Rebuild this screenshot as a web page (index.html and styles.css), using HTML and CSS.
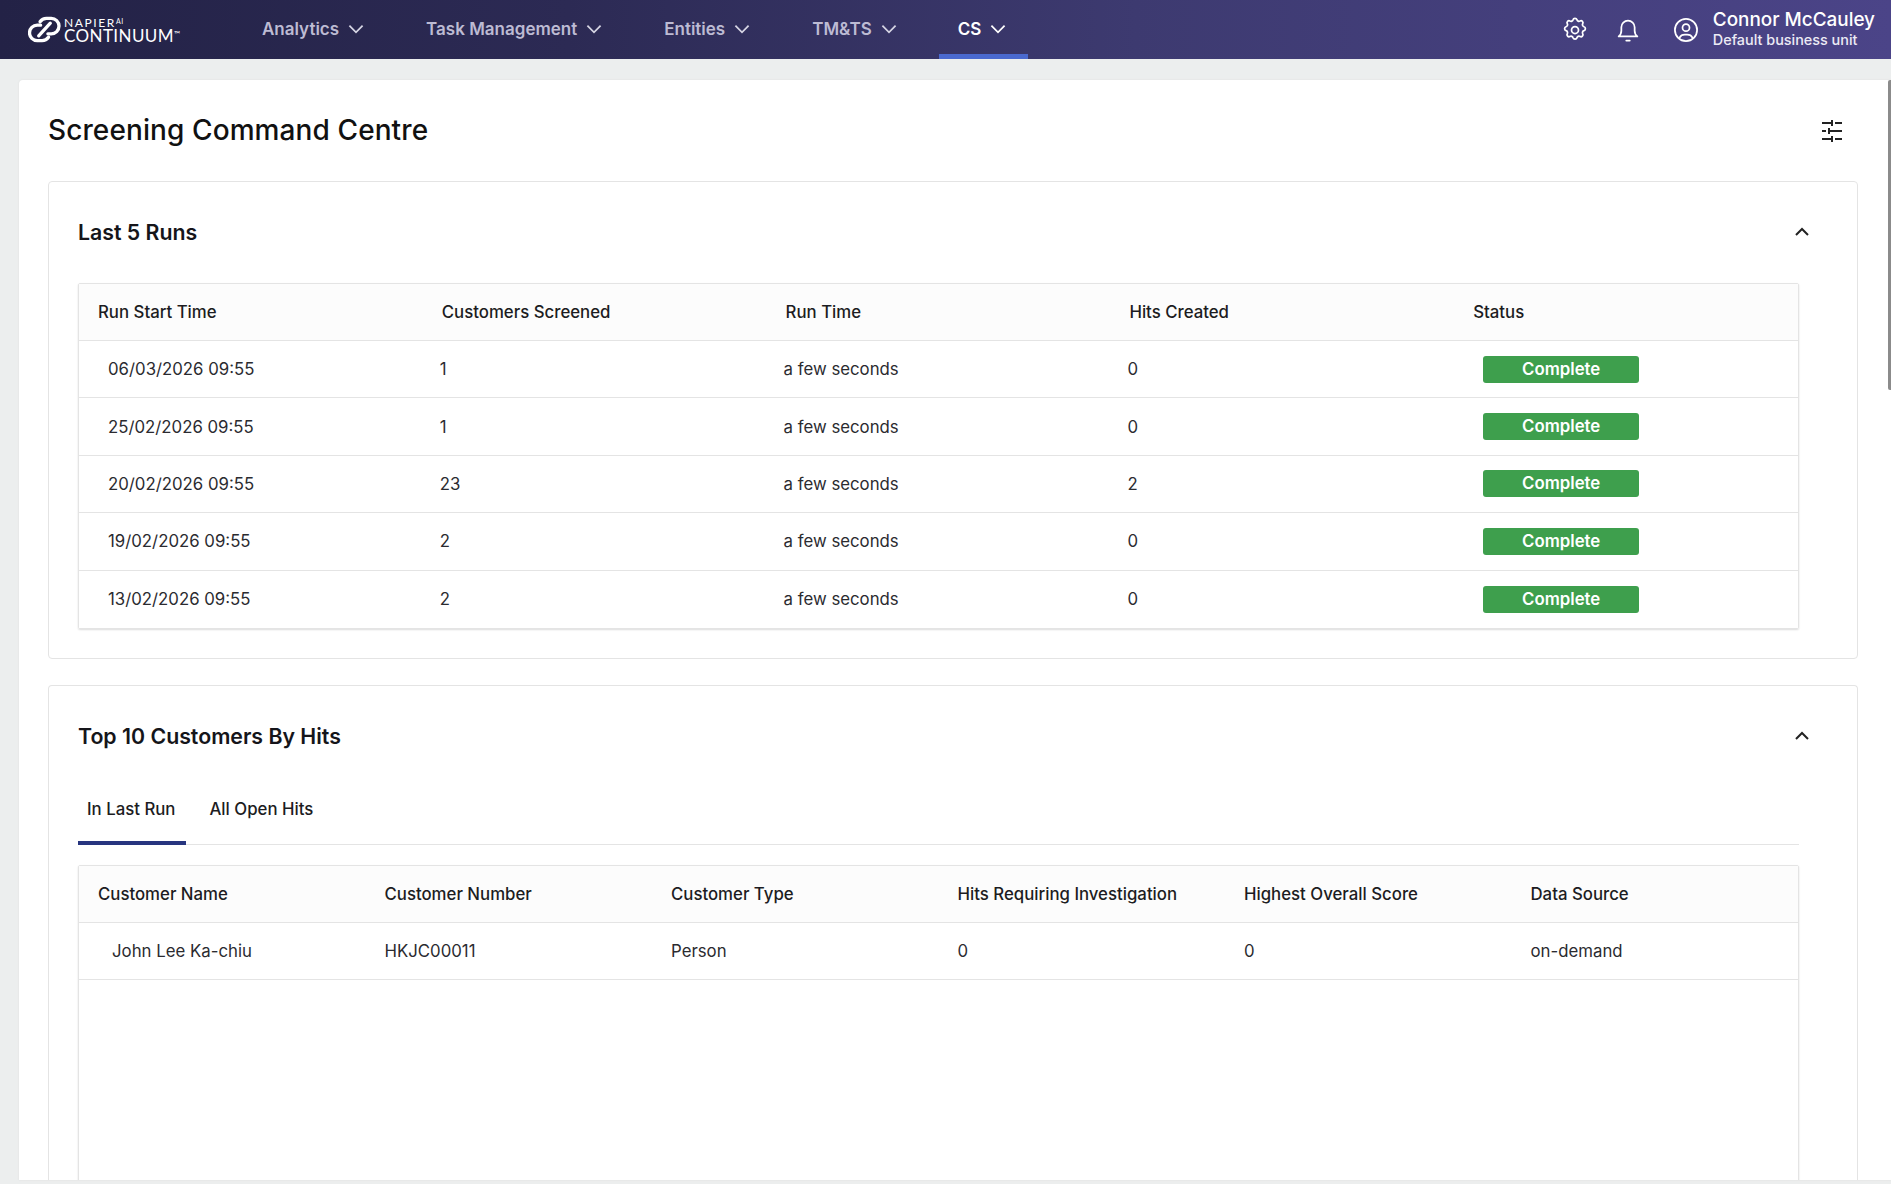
FILE: index.html
```html
<!DOCTYPE html>
<html lang="en">
<head>
<meta charset="utf-8">
<title>Screening Command Centre</title>
<link rel="stylesheet" href="styles.css">
</head>
<body>
<header class="topbar">
  <a class="logo">
    <svg class="logo-mark" viewBox="0 0 34 30" fill="none" stroke="#fff" stroke-width="3.4" stroke-linecap="round">
      <path d="M13 10.5H9.5a8 8 0 0 0 0 16h5a8 8 0 0 0 6.6-3.5"/>
      <path d="M20.5 19.5h3.5a8 8 0 0 0 0-16h-5a8 8 0 0 0-6.6 3.5"/>
      <path d="M11 21.5 23 8.5"/>
    </svg>
    <span class="logo-text">
      <span class="logo-top">NAPIER<span class="logo-ai">AI</span></span>
      <span class="logo-bottom">CONTINUUM<span class="logo-tm">™</span></span>
    </span>
  </a>
  <nav class="nav">
    <a class="nav-item">Analytics<svg class="chev" viewBox="0 0 20 20"><path d="M4 7l6 6 6-6"/></svg></a>
    <a class="nav-item">Task Management<svg class="chev" viewBox="0 0 20 20"><path d="M4 7l6 6 6-6"/></svg></a>
    <a class="nav-item">Entities<svg class="chev" viewBox="0 0 20 20"><path d="M4 7l6 6 6-6"/></svg></a>
    <a class="nav-item">TM&amp;TS<svg class="chev" viewBox="0 0 20 20"><path d="M4 7l6 6 6-6"/></svg></a>
    <a class="nav-item nav-active">CS<svg class="chev" viewBox="0 0 20 20"><path d="M4 7l6 6 6-6"/></svg></a>
  </nav>
  <div class="top-actions">
    <svg class="top-icon top-icon-gear" viewBox="0 0 24 24"><path d="M10.3 3.2c.4-1.600 2.900-1.600 3.400 0a1.800 1.800 0 0 0 2.600 1.100c1.500-.9 3.200.8 2.300 2.300a1.800 1.800 0 0 0 1.100 2.600c1.600.4 1.600 2.900 0 3.400a1.800 1.800 0 0 0-1.100 2.600c.9 1.500-.8 3.200-2.300 2.300a1.800 1.800 0 0 0-2.600 1.100c-.4 1.600-2.900 1.600-3.400 0a1.800 1.800 0 0 0-2.600-1.100c-1.500.9-3.200-.8-2.300-2.300a1.800 1.800 0 0 0-1.100-2.600c-1.600-.4-1.600-2.900 0-3.400a1.800 1.800 0 0 0 1.100-2.600c-.9-1.500.8-3.200 2.300-2.300a1.800 1.800 0 0 0 2.600-1.100z"/><circle cx="12" cy="12" r="3"/></svg>
    <svg class="top-icon top-icon-bell" viewBox="0 0 24 24"><path d="M4 17.500h16c-1.400-1.100-2.300-2.600-2.300-4.800v-3a5.700 5.700 0 0 0-11.400 0v3c0 2.200-.9 3.700-2.300 4.800z"/><path d="M10.500 21h3"/></svg>
    <svg class="top-icon top-icon-user" viewBox="0 0 24 24"><circle cx="12" cy="12" r="9.500"/><circle cx="12" cy="10" r="3"/><path d="M6.500 18.500a5 4 0 0 1 5-2.500h1a5 4 0 0 1 5 2.500"/></svg>
    <div class="user">
      <div class="user-name">Connor McCauley</div>
      <div class="user-unit">Default business unit</div>
    </div>
  </div>
</header>

<main class="page">
  <div class="sheet">
    <div class="title-row">
      <h1 class="page-title">Screening Command Centre</h1>
      <svg class="filter-icon" viewBox="0 0 22 22"><path d="M1 3h10M14 3h7M11 0v6M1 11h4M8 11h13M8 8v6M1 19h10M14 19h7M11 16v6"/></svg>
    </div>

    <section class="panel">
      <div class="panel-head">
        <h2 class="panel-title">Last 5 Runs</h2>
        <svg class="chev-up" viewBox="0 0 20 20"><path d="M4 13l6-6 6 6"/></svg>
      </div>
      <div class="table table-runs">
        <div class="row row-head cols-5">
          <div class="cell-h">Run Start Time</div><div class="cell-h">Customers Screened</div><div class="cell-h">Run Time</div><div class="cell-h">Hits Created</div><div class="cell-h">Status</div>
        </div>
        <div class="row cols-5">
          <div class="cell cell-date">06/03/2026 09:55</div><div class="cell">1</div><div class="cell">a few seconds</div><div class="cell">0</div><div class="cell cell-status"><span class="badge">Complete</span></div>
        </div>
        <div class="row cols-5">
          <div class="cell cell-date">25/02/2026 09:55</div><div class="cell">1</div><div class="cell">a few seconds</div><div class="cell">0</div><div class="cell cell-status"><span class="badge">Complete</span></div>
        </div>
        <div class="row cols-5">
          <div class="cell cell-date">20/02/2026 09:55</div><div class="cell">23</div><div class="cell">a few seconds</div><div class="cell">2</div><div class="cell cell-status"><span class="badge">Complete</span></div>
        </div>
        <div class="row cols-5">
          <div class="cell cell-date">19/02/2026 09:55</div><div class="cell">2</div><div class="cell">a few seconds</div><div class="cell">0</div><div class="cell cell-status"><span class="badge">Complete</span></div>
        </div>
        <div class="row cols-5">
          <div class="cell cell-date">13/02/2026 09:55</div><div class="cell">2</div><div class="cell">a few seconds</div><div class="cell">0</div><div class="cell cell-status"><span class="badge">Complete</span></div>
        </div>
      </div>
    </section>

    <section class="panel panel-grow">
      <div class="panel-head panel-head-2">
        <h2 class="panel-title">Top 10 Customers By Hits</h2>
        <svg class="chev-up" viewBox="0 0 20 20"><path d="M4 13l6-6 6 6"/></svg>
      </div>
      <div class="tabs">
        <a class="tab tab-active">In Last Run</a>
        <a class="tab">All Open Hits</a>
      </div>
      <div class="table table-grow">
        <div class="row row-head row-lift cols-6">
          <div class="cell-h">Customer Name</div><div class="cell-h">Customer Number</div><div class="cell-h">Customer Type</div><div class="cell-h">Hits Requiring Investigation</div><div class="cell-h">Highest Overall Score</div><div class="cell-h">Data Source</div>
        </div>
        <div class="row cols-6">
          <div class="cell cell-name">John Lee Ka-chiu</div><div class="cell cell-plain">HKJC00011</div><div class="cell cell-plain">Person</div><div class="cell cell-plain">0</div><div class="cell cell-plain">0</div><div class="cell cell-plain">on-demand</div>
        </div>
      </div>
    </section>

    <div class="scroll-thumb"></div>
  </div>
</main>
</body>
</html>
```

FILE: styles.css
```css
* { box-sizing: border-box; }

html, body {
  margin: 0;
  height: 100%;
  overflow: hidden;
}

body {
  display: flex;
  flex-direction: column;
  background: #eceeee;
  font-family: Inter, "Liberation Sans", sans-serif;
  color: #1c1c22;
}

/* Top bar */
.topbar {
  flex: none;
  height: 59px;
  display: flex;
  align-items: stretch;
  background: linear-gradient(90deg, #232246 0%, #2c2a54 30%, #3d3a70 60%, #4b4488 100%);
  color: #fff;
}

.logo {
  flex: none;
  width: 243px;
  display: flex;
  align-items: center;
  gap: 3px;
  padding: 0 0 0 28px;
}

.logo-mark {
  width: 33px;
  height: 29px;
}

.logo-text {
  display: flex;
  flex-direction: column;
  font-family: Lato, Inter, sans-serif;
  color: #fff;
}

.logo-top {
  font-size: 12px;
  letter-spacing: 1.600px;
  line-height: 11px;
}

.logo-ai {
  font-size: 7px;
  line-height: 7px;
  letter-spacing: 0.5px;
  position: relative;
  top: -3px;
}

.logo-bottom {
  font-size: 17px;
  letter-spacing: 0.4px;
  line-height: 15px;
}

.logo-tm {
  font-size: 8px;
  line-height: 8px;
  position: relative;
  top: -5px;
}

.nav {
  display: flex;
  align-items: stretch;
  gap: 21px;
}

.nav-item {
  display: flex;
  align-items: center;
  gap: 6px;
  padding: 4px 19px 0;
  font-size: 17px;
  font-weight: 600;
  color: #bdbbd3;
  border-bottom: 5px solid transparent;
}

.nav-item + .nav-active {
  margin-left: -1px;
}

.nav-active {
  color: #fff;
  border-bottom-color: #4a69cf;
}

.chev {
  width: 22px;
  height: 22px;
  fill: none;
  stroke: currentColor;
  stroke-width: 1.600;
  color: #fff;
}

.nav-item:not(.nav-active) .chev {
  color: #d6d5e4;
}

.top-actions {
  margin-left: auto;
  display: flex;
  align-items: center;
  padding-right: 16px;
}

.top-icon {
  width: 28px;
  height: 28px;
  fill: none;
  stroke: #fff;
  stroke-width: 1.500;
  stroke-linecap: round;
  stroke-linejoin: round;
}

.top-icon-gear {
  margin-right: 25px;
}

.top-icon-bell {
  margin-right: 30px;
}

.top-icon-user {
  margin-right: 13px;
}

.user {
  margin-top: -2px;
}

.user-name {
  font-size: 18.900px;
  font-weight: 500;
  line-height: 22px;
}

.user-unit {
  font-size: 14.400px;
  font-weight: 500;
  line-height: 18px;
  color: #ecebf5;
}

/* Page */
.page {
  flex: 1;
  min-height: 0;
  display: flex;
  padding: 21px 0 4px 19px;
}

.sheet {
  flex: 1;
  position: relative;
  display: flex;
  flex-direction: column;
  gap: 26px;
  padding: 0 33px 0 29px;
  background: #fff;
  border-radius: 4px 0 0 0;
  box-shadow: 0 0 2px #dcdcdc;
  overflow: hidden;
}

.title-row {
  flex: none;
  height: 101px;
  margin-bottom: -26px;
  display: flex;
  align-items: center;
  justify-content: space-between;
  padding: 0 15px 0 0;
}

.page-title {
  margin: 0 0 1px;
  font-size: 28px;
  font-weight: 550;
  letter-spacing: 0.1px;
  color: #111;
}

.filter-icon {
  width: 22px;
  height: 22px;
  fill: none;
  stroke: #222;
  stroke-width: 2;
}

.panel {
  flex: none;
  height: 478px;
  padding: 0 58px 0 29px;
  border: 1px solid #e4e4e4;
  border-radius: 4px;
  background: #fff;
}

.panel-grow {
  flex: 1;
  height: auto;
  min-height: 0;
  display: flex;
  flex-direction: column;
  border-bottom: 0;
  border-radius: 4px 4px 0 0;
  margin-bottom: -2px;
}

.panel-head {
  height: 101px;
  display: flex;
  align-items: center;
  justify-content: space-between;
}

.panel-head-2 {
  flex: none;
  height: 100px;
}

.panel-title {
  margin: 0 0 1px;
  font-size: 21.300px;
  font-weight: 600;
  color: #15151a;
}

.chev-up {
  width: 20px;
  height: 20px;
  fill: none;
  stroke: #222;
  stroke-width: 2;
  margin: 0 -13px 1px 0;
}

.tabs {
  flex: none;
  display: flex;
  height: 59px;
  border-bottom: 1px solid #e4e4e4;
}

.tab {
  display: flex;
  align-items: center;
  height: 58px;
  padding: 0 11px 12px 9px;
  margin-right: 14px;
  font-size: 16.800px;
  font-weight: 450;
  color: #1c1c22;
}

.tab-active {
  height: 59px;
  margin-bottom: -1px;
  padding-bottom: 10px;
  border-bottom: 4px solid #27357f;
}

.table {
  border: 1px solid #e4e4e4;
  border-radius: 2px;
  box-shadow: 0 1px 2px #dcdcdc;
}

.table-grow {
  flex: 1;
  margin-top: 20px;
  min-height: 0;
}

.row {
  display: grid;
  height: 57.400px;
  align-items: center;
  border-bottom: 1px solid #e4e4e4;
  font-size: 16.800px;
  background: #fff;
}

.table-runs .row:last-child {
  border-bottom: 0;
}

.cols-5 {
  grid-template-columns: repeat(5, 1fr);
}

.cols-6 {
  grid-template-columns: repeat(6, 1fr);
}

.row-head {
  height: 57px;
  padding-bottom: 1px;
  background: #fcfcfc;
}

.cell-h {
  padding-left: 19px;
  font-weight: 450;
  color: #1c1c22;
}

.cell {
  padding-left: 17px;
  color: #2b2b30;
}

.cell-date {
  padding-left: 29px;
}

.cell-name {
  padding-left: 33px;
}

.cell-plain {
  padding-left: 19px;
}

.cell-status {
  padding-left: 29px;
}

.badge {
  display: block;
  width: 156px;
  height: 27px;
  line-height: 27px;
  text-align: center;
  font-size: 16.800px;
  font-weight: 600;
  color: #fff;
  background: #3e9f4d;
  border-radius: 3px;
}

.scroll-thumb {
  position: absolute;
  top: 0;
  right: 0;
  width: 3px;
  height: 310px;
  background: #8b8b8b;
  border-radius: 2px 0 0 2px;
}
```
